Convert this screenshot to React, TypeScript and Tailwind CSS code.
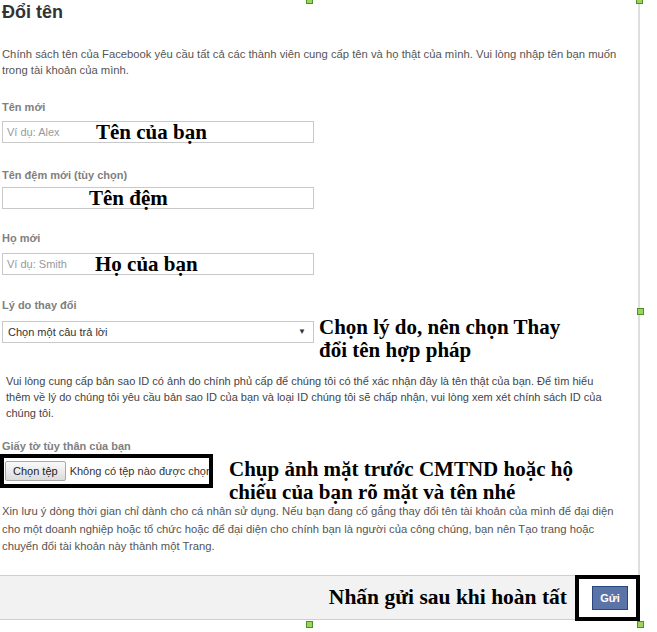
import React from "react";

const fbFont = "font-['Liberation_Sans',Arial,sans-serif]";
const noteFont =
  "font-['Liberation_Serif','Times_New_Roman',serif] font-bold text-[21px] leading-[23px] text-black";

function Label({ children, className }: { children: React.ReactNode; className?: string }) {
  return (
    <p className={`text-[11px] leading-[14px] font-bold text-[#808080] ${className ?? ""}`}>
      {children}
    </p>
  );
}

function NameField({
  placeholder,
  note,
  noteOffset,
}: {
  placeholder?: string;
  note: string;
  noteOffset: string;
}) {
  return (
    <div className="flex h-[22px] w-[312px] items-center border border-[#c9c9c9] bg-white">
      <span className="w-[90px] shrink-0 pl-[4px] text-[11px] text-[#999]">{placeholder}</span>
      <span className={`${noteFont} ${noteOffset} whitespace-nowrap`}>{note}</span>
    </div>
  );
}

function Handle({ className }: { className: string }) {
  return (
    <span
      className={`absolute h-[7px] w-[7px] border border-[#4f8f2a] bg-[#9bd45a] ${className}`}
    />
  );
}

export default function App() {
  return (
    <div className={`relative h-[632px] w-[657px] overflow-hidden bg-white ${fbFont}`}>
      <div className="h-[575px] w-[640px] border-r-2 border-[#dedede] pl-[2px] pr-4">
        <h2 className="pt-[1px] text-[18px] leading-[22px] font-bold text-[#333]">Đổi tên</h2>

        <p className="mt-[23px] text-[11.25px] leading-[16px] text-[#555]">
          Chính sách tên của Facebook yêu cầu tất cả các thành viên cung cấp tên và họ thật của
          mình. Vui lòng nhập tên bạn muốn trong tài khoản của mình.
        </p>

        <Label className="mt-[22px]">Tên mới</Label>
        <div className="mt-[7px]">
          <NameField placeholder="Ví dụ: Alex" note="Tên của bạn" noteOffset="ml-[3px]" />
        </div>

        <Label className="mt-[25px]">Tên đệm mới (tùy chọn)</Label>
        <div className="mt-[5px]">
          <NameField note="Tên đệm" noteOffset="-ml-[4px]" />
        </div>

        <Label className="mt-[22px]">Họ mới</Label>
        <div className="mt-[8px]">
          <NameField placeholder="Ví dụ: Smith" note="Họ của bạn" noteOffset="ml-[2px]" />
        </div>

        <Label className="mt-[23px]">Lý do thay đổi</Label>
        <div className="mt-[4px] flex h-[46px] items-start">
          <div className="mt-[5px] flex h-[22px] w-[312px] shrink-0 items-center justify-between border border-[#c9c9c9] bg-white pr-[7px] pl-[5px] text-[11px] text-[#333]">
            <span>Chọn một câu trả lời</span>
            <span className="text-[8px]">▼</span>
          </div>
          <p className={`${noteFont} ml-[5px]`}>
            Chọn lý do, nên chọn Thay
            <br />
            đổi tên hợp pháp
          </p>
        </div>

        <p className="mt-[11px] w-[612px] pl-[4px] font-['Arial','Liberation_Sans',sans-serif] text-[11px] leading-[16px] text-[#444]">
          Vui lòng cung cấp bản sao ID có ảnh do chính phủ cấp để chúng tôi có thể xác nhận đây
          là tên thật của bạn. Để tìm hiểu thêm về lý do chúng tôi yêu cầu bản sao ID của bạn và
          loại ID chúng tôi sẽ chấp nhận, vui lòng xem xét chính sách ID của chúng tôi.
        </p>

        <Label className="mt-[18px]">Giấy tờ tùy thân của bạn</Label>
        <div className="mt-[1px] -ml-[2px] flex h-[34px] items-start">
          <div className="flex h-[34px] w-[213px] shrink-0 items-center gap-[4px] overflow-hidden border-4 border-black pl-[1px] whitespace-nowrap">
            <button className="h-[20px] rounded-[2px] border border-[#a9a9a9] bg-gradient-to-b from-[#fafafa] to-[#dcdcdc] px-[7px] text-[11px] text-[#222]">
              Chọn tệp
            </button>
            <span className="text-[11px] text-[#333]">Không có tệp nào được chọn</span>
          </div>
          <p className={`${noteFont} mt-[4px] ml-[16px] whitespace-nowrap`}>
            Chụp ảnh mặt trước CMTND hoặc hộ
            <br />
            chiếu của bạn rõ mặt và tên nhé
          </p>
        </div>

        <p className="mt-[15px] text-[11.25px] leading-[17.5px] text-[#555]">
          Xin lưu ý dòng thời gian chỉ dành cho cá nhân sử dụng. Nếu bạn đang cố gắng thay đổi
          tên tài khoản của mình để đại diện cho một doanh nghiệp hoặc tổ chức hoặc để đại diện
          cho chính bạn là người của công chúng, bạn nên Tạo trang hoặc chuyển đổi tài khoản này
          thành một Trang.
        </p>
      </div>

      <div className="flex w-[640px] items-start">
        <div className="flex h-[45px] flex-1 items-center justify-end border-y border-[#cfcfcf] bg-[#f2f2f2] pr-[8px]">
          <span className="font-['Liberation_Serif','Times_New_Roman',serif] text-[21.5px] leading-[23px] font-bold text-black">
            Nhấn gửi sau khi hoàn tất
          </span>
        </div>
        <div className="flex h-[46px] w-[65px] items-center justify-center border-4 border-black bg-white pl-[5px]">
          <button className="h-[24px] w-[36px] border border-[#29447e] bg-[#5b74a8] text-[11px] font-bold text-white">
            Gửi
          </button>
        </div>
      </div>

      <Handle className="top-[-3px] left-[306px]" />
      <Handle className="top-[-3px] left-[636px]" />
      <Handle className="top-[308px] left-[637px]" />
      <Handle className="top-[621px] left-[306px]" />
      <Handle className="top-[621px] left-[637px]" />
    </div>
  );
}
